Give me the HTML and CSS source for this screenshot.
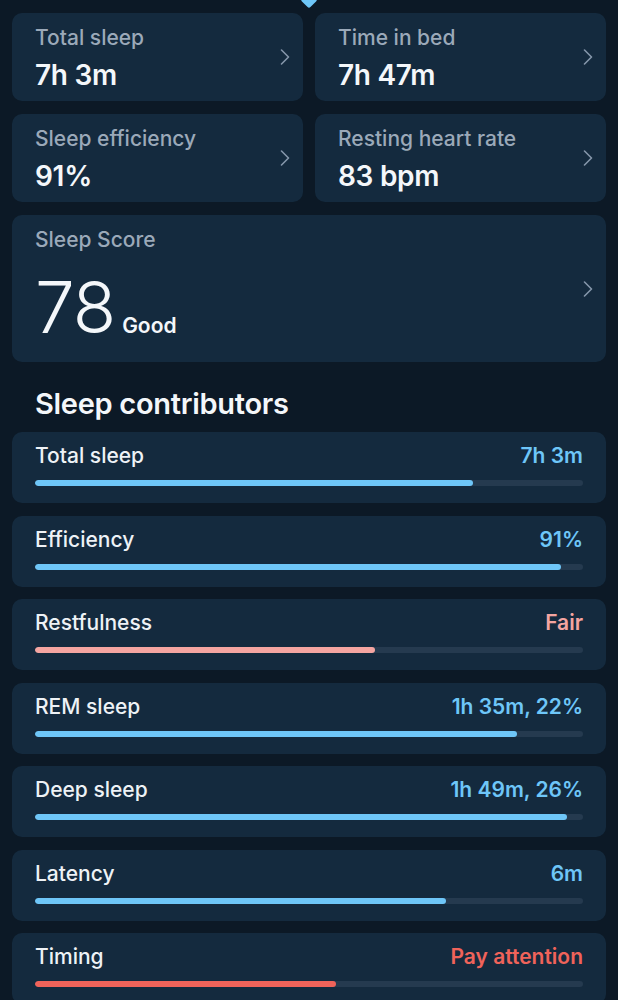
FILE: index.html
```html
<!DOCTYPE html>
<html lang="en">
<head>
<meta charset="utf-8">
<link rel="stylesheet" href="styles.css">
</head>
<body>
<div class="page">
  <div class="grid">
    <div class="card stat">
      <div class="stat-text">
        <div class="stat-label">Total sleep</div>
        <div class="stat-value">7h 3m</div>
      </div>
      <svg class="chev" width="10" height="16" viewBox="0 0 10 16"><path d="M1.5 1 L8.5 8 L1.5 15" fill="none" stroke="currentColor" stroke-width="1.6" stroke-linecap="round" stroke-linejoin="round"/></svg>
    </div>
    <div class="card stat">
      <div class="stat-text">
        <div class="stat-label">Time in bed</div>
        <div class="stat-value">7h 47m</div>
      </div>
      <svg class="chev" width="10" height="16" viewBox="0 0 10 16"><path d="M1.5 1 L8.5 8 L1.5 15" fill="none" stroke="currentColor" stroke-width="1.6" stroke-linecap="round" stroke-linejoin="round"/></svg>
    </div>
    <div class="card stat">
      <div class="stat-text">
        <div class="stat-label">Sleep efficiency</div>
        <div class="stat-value">91%</div>
      </div>
      <svg class="chev" width="10" height="16" viewBox="0 0 10 16"><path d="M1.5 1 L8.5 8 L1.5 15" fill="none" stroke="currentColor" stroke-width="1.6" stroke-linecap="round" stroke-linejoin="round"/></svg>
    </div>
    <div class="card stat">
      <div class="stat-text">
        <div class="stat-label">Resting heart rate</div>
        <div class="stat-value">83 bpm</div>
      </div>
      <svg class="chev" width="10" height="16" viewBox="0 0 10 16"><path d="M1.5 1 L8.5 8 L1.5 15" fill="none" stroke="currentColor" stroke-width="1.6" stroke-linecap="round" stroke-linejoin="round"/></svg>
    </div>
  </div>

  <div class="card score">
    <div class="score-text">
      <div class="stat-label">Sleep Score</div>
      <div class="score-row"><span class="score-num">78</span><span class="score-word">Good</span></div>
    </div>
    <svg class="chev" width="10" height="16" viewBox="0 0 10 16"><path d="M1.5 1 L8.5 8 L1.5 15" fill="none" stroke="currentColor" stroke-width="1.6" stroke-linecap="round" stroke-linejoin="round"/></svg>
  </div>

  <h2 class="section-title">Sleep contributors</h2>

  <div class="list">
    <div class="card contrib">
      <div class="contrib-head"><span class="contrib-name">Total sleep</span><span class="contrib-val blue">7h 3m</span></div>
      <div class="track"><div class="fill blue-bg" style="width:80%"></div></div>
    </div>
    <div class="card contrib">
      <div class="contrib-head"><span class="contrib-name">Efficiency</span><span class="contrib-val blue">91%</span></div>
      <div class="track"><div class="fill blue-bg" style="width:96%"></div></div>
    </div>
    <div class="card contrib">
      <div class="contrib-head"><span class="contrib-name">Restfulness</span><span class="contrib-val pink">Fair</span></div>
      <div class="track"><div class="fill pink-bg" style="width:62%"></div></div>
    </div>
    <div class="card contrib">
      <div class="contrib-head"><span class="contrib-name">REM sleep</span><span class="contrib-val blue">1h 35m, 22%</span></div>
      <div class="track"><div class="fill blue-bg" style="width:88%"></div></div>
    </div>
    <div class="card contrib">
      <div class="contrib-head"><span class="contrib-name">Deep sleep</span><span class="contrib-val blue">1h 49m, 26%</span></div>
      <div class="track"><div class="fill blue-bg" style="width:97%"></div></div>
    </div>
    <div class="card contrib">
      <div class="contrib-head"><span class="contrib-name">Latency</span><span class="contrib-val blue">6m</span></div>
      <div class="track"><div class="fill blue-bg" style="width:75%"></div></div>
    </div>
    <div class="card contrib">
      <div class="contrib-head"><span class="contrib-name">Timing</span><span class="contrib-val red">Pay attention</span></div>
      <div class="track"><div class="fill red-bg" style="width:55%"></div></div>
    </div>
  </div>
</div>
</body>
</html>
```

FILE: styles.css
```css
* { box-sizing: border-box; }
html, body {
  margin: 0;
  background: #0c1926;
  font-family: Inter, "Noto Sans", sans-serif;
  color: #eef2f6;
}
.page {
  position: relative;
  padding: 13px 12px 40px;
  width: 618px;
}
.page::before {
  content: "";
  position: absolute;
  left: 303px;
  top: -6px;
  width: 12px;
  height: 12px;
  background: #6ec6f8;
  transform: rotate(45deg);
  border-radius: 2px;
}
.grid {
  display: grid;
  grid-template-columns: 1fr 1fr;
  gap: 13px 12px;
}
.card {
  background: #142a3e;
  border-radius: 10px;
}
.stat {
  height: 88px;
  padding: 0 13px 0 23px;
  display: flex;
  align-items: center;
  justify-content: space-between;
}
.stat-text {
  align-self: flex-start;
  padding-top: 13px;
}
.stat-label {
  font-size: 21px;
  line-height: 24px;
  font-weight: 500;
  color: #9ba9b9;
}
.stat-value {
  margin-top: 9px;
  font-size: 28px;
  line-height: 32px;
  font-weight: 600;
  color: #f4f7fa;
  letter-spacing: -0.3px;
}
.chev {
  color: #8596aa;
  flex: none;
}
.score {
  margin-top: 13px;
  height: 147px;
  padding: 0 13px 0 23px;
  display: flex;
  justify-content: space-between;
  align-items: center;
}
.score-text {
  align-self: flex-start;
  padding-top: 13px;
}
.score-row {
  display: flex;
  align-items: baseline;
  margin-top: 10px;
}
.score-num {
  font-size: 71px;
  line-height: 90px;
  font-weight: 300;
  color: #f4f7fa;
  letter-spacing: -1px;
}
.score-word {
  margin-left: 7px;
  font-size: 21px;
  font-weight: 600;
  color: #f4f7fa;
}
.section-title {
  margin: 0;
  padding: 25px 0 11px 23px;
  font-size: 29px;
  line-height: 34px;
  font-weight: 600;
  color: #f4f7fa;
  letter-spacing: -0.3px;
}
.list {
  display: flex;
  flex-direction: column;
  gap: 12.5px;
}
.contrib {
  height: 71px;
  padding: 12px 23px 0;
}
.contrib-head {
  display: flex;
  justify-content: space-between;
  font-size: 21px;
  line-height: 24px;
  font-weight: 500;
}
.contrib-name { color: #eef2f6; }
.contrib-val { font-weight: 600; }
.blue { color: #6ec6f8; }
.pink { color: #f4a5a1; }
.red { color: #f0635a; }
.track {
  margin-top: 12px;
  height: 6px;
  border-radius: 3px;
  background: #253a4f;
  overflow: hidden;
}
.fill {
  height: 100%;
  border-radius: 3px;
}
.blue-bg { background: #6ec6f8; }
.pink-bg { background: #f4a5a1; }
.red-bg { background: #f0635a; }
```
